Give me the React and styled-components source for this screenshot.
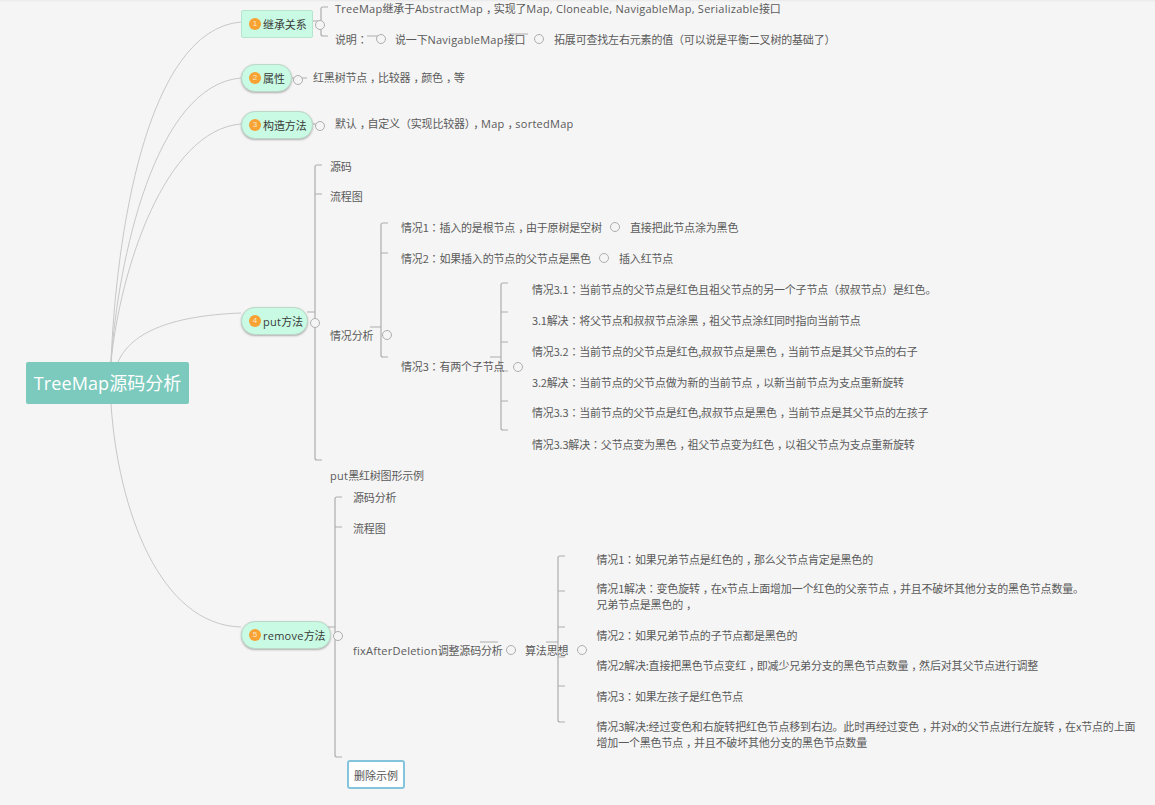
import React from "react";
import styled, { createGlobalStyle } from "styled-components";

const Global = createGlobalStyle`
  html, body { margin: 0; padding: 0; background: #f5f5f5; }
  body { font-family: "Noto Sans CJK SC", "Noto Sans", sans-serif; overflow: hidden; }
`;

const Canvas = styled.main`
  position: relative;
  width: 1155px;
  height: 805px;
  overflow: hidden;
  background: #f5f5f5;
  box-shadow: inset 0 2px 2px -1px rgba(0, 0, 0, 0.05);
`;

const Wires = styled.svg`
  position: absolute;
  left: 0;
  top: 0;
`;

const Label = styled.div`
  position: absolute;
  left: ${(p) => p.$x}px;
  top: ${(p) => p.$y - (p.$tight ? 8 : 6)}px;
  display: flex;
  flex-direction: column;
  font-size: 11px;
  line-height: ${(p) => (p.$tight ? 16 : 12)}px;
  letter-spacing: -0.18px;
  color: #5a5a5a;
  white-space: pre;
`;

const Line = styled.div``;

const Latin = styled.span`
  font-family: "Open Sans", "Noto Sans", sans-serif;
  letter-spacing: 0.25px;
`;

const Colon = styled.span`
  font-family: "Noto Sans CJK TC", sans-serif;
`;

const Comma = styled.span`
  padding-left: 3px;
  letter-spacing: -3.18px;
`;

const Root = styled.div`
  position: absolute;
  left: 26px;
  top: 362px;
  width: 163px;
  height: 42px;
  box-sizing: border-box;
  padding-bottom: 2px;
  display: flex;
  align-items: center;
  justify-content: center;
  background: #7ccabd;
  border-radius: 2px;
  color: #fff;
  font-size: 18px;
  white-space: nowrap;
  span { font-size: 18px; letter-spacing: 0.1px; }
`;

const Topic = styled.div`
  position: absolute;
  left: 241px;
  top: ${(p) => p.$y}px;
  width: ${(p) => p.$w}px;
  height: 28px;
  box-sizing: border-box;
  display: flex;
  align-items: center;
  gap: 2px;
  padding-left: 7px;
  background: #c9fbe4;
  border: 1px solid ${(p) => (p.$square ? "#b5e6cd" : "#bcd8c8")};
  border-radius: ${(p) => (p.$square ? "2px" : "14px")};
  box-shadow: ${(p) => (p.$square ? "none" : "0 1px 2px rgba(90, 90, 90, 0.45)")};
  color: #3a3a3a;
  font-size: 11px;
  letter-spacing: -0.1px;
  white-space: nowrap;
`;

const Badge = styled.span`
  width: 12px;
  height: 12px;
  flex: none;
  border-radius: 50%;
  background: #f7a233;
  color: #fde8c8;
  font: 8px/12px "Liberation Sans", sans-serif;
  text-align: center;
`;

const Toggle = styled.span`
  position: absolute;
  left: ${(p) => p.$x - 5}px;
  top: ${(p) => p.$y - 5}px;
  width: 10px;
  height: 10px;
  box-sizing: border-box;
  border: 1px solid #aeaeae;
  border-radius: 50%;
  background: #f5f5f5;
`;

const Picture = styled.div`
  position: absolute;
  left: 347px;
  top: 760px;
  width: 58px;
  height: 29px;
  box-sizing: border-box;
  display: flex;
  align-items: center;
  justify-content: center;
  background: #fff;
  border: 2px solid #84c5dd;
  border-radius: 3px;
  color: #555;
  font-size: 11px;
`;

const curves = [
  "M111 362 C116 240 145 30 241 22",
  "M111 362 C118 260 155 85 241 78",
  "M111 362 C120 270 165 130 241 124",
  "M118 362 C130 335 165 316 241 313",
  "M111 404 C118 510 160 625 241 627",
];

const bracket = (x, top, bottom, ticks, stemY, stemX, end) =>
  [
    `M${end} ${top} H${x + 2} Q${x} ${top} ${x} ${top + 2} V${bottom - 2} Q${x} ${bottom} ${x + 2} ${bottom} H${end}`,
    ...ticks.map((t) => `M${x} ${t} H${end}`),
    `M${stemX} ${stemY} H${x}`,
  ].join(" ");

const brackets = [
  bracket(321, 7, 36, [], 21, 312, 328),
  bracket(315, 165, 460, [194], 312, 307, 322),
  bracket(381, 223, 357, [253], 327, 370, 388),
  bracket(501, 283, 430, [312, 342, 371, 401], 357, 490, 508),
  bracket(335, 497, 757, [527], 627, 323, 342),
  bracket(558, 556, 722, [591, 627, 657, 686], 642, 546, 565),
  "M291 78 H307 M312 124 H320 M367 36 H378 M480 642 H498 M509 34 H528",
];

const labels = [
  [335, 8, "TreeMap继承于AbstractMap，实现了Map, Cloneable, NavigableMap, Serializable接口"],
  [335, 39, "说明："],
  [395, 39, "说一下NavigableMap接口"],
  [554, 39, "拓展可查找左右元素的值（可以说是平衡二叉树的基础了）"],
  [313, 77, "红黑树节点，比较器，颜色，等"],
  [335, 123, "默认，自定义（实现比较器），Map，sortedMap"],
  [330, 166, "源码"],
  [330, 196, "流程图"],
  [330, 335, "情况分析"],
  [401, 227, "情况1：插入的是根节点，由于原树是空树"],
  [630, 227, "直接把此节点涂为黑色"],
  [401, 258, "情况2：如果插入的节点的父节点是黑色"],
  [619, 258, "插入红节点"],
  [401, 366, "情况3：有两个子节点"],
  [532, 289, "情况3.1：当前节点的父节点是红色且祖父节点的另一个子节点（叔叔节点）是红色。"],
  [532, 320, "3.1解决：将父节点和叔叔节点涂黑，祖父节点涂红同时指向当前节点"],
  [532, 351, "情况3.2：当前节点的父节点是红色,叔叔节点是黑色，当前节点是其父节点的右子"],
  [532, 382, "3.2解决：当前节点的父节点做为新的当前节点，以新当前节点为支点重新旋转"],
  [532, 412, "情况3.3：当前节点的父节点是红色,叔叔节点是黑色，当前节点是其父节点的左孩子"],
  [532, 444, "情况3.3解决：父节点变为黑色，祖父节点变为红色，以祖父节点为支点重新旋转"],
  [330, 475, "put黑红树图形示例"],
  [353, 497, "源码分析"],
  [353, 528, "流程图"],
  [353, 650, "fixAfterDeletion调整源码分析"],
  [525, 650, "算法思想"],
  [596.5, 559, "情况1：如果兄弟节点是红色的，那么父节点肯定是黑色的"],
  [596.5, 588, "情况1解决：变色旋转，在x节点上面增加一个红色的父亲节点，并且不破坏其他分支的黑色节点数量。\n兄弟节点是黑色的，", true],
  [596.5, 635, "情况2：如果兄弟节点的子节点都是黑色的"],
  [596.5, 665, "情况2解决:直接把黑色节点变红，即减少兄弟分支的黑色节点数量，然后对其父节点进行调整"],
  [596.5, 696, "情况3：如果左孩子是红色节点"],
  [596.5, 726, "情况3解决:经过变色和右旋转把红色节点移到右边。此时再经过变色，并对x的父节点进行左旋转，在x节点的上面\n增加一个黑色节点，并且不破坏其他分支的黑色节点数量", true],
];

const topics = [
  { n: 1, text: "继承关系", y: 10, w: 72, square: true },
  { n: 2, text: "属性", y: 64, w: 51 },
  { n: 3, text: "构造方法", y: 111, w: 72 },
  { n: 4, text: "put方法", y: 307, w: 67 },
  { n: 5, text: "remove方法", y: 621, w: 90 },
];

const toggles = [
  [320, 25], [298, 80], [320, 126], [315, 323], [338, 636], [387, 335], [518, 367],
  [381, 39], [539, 39], [615, 227], [604, 258], [511, 650], [582, 650],
];

const punct = (text, prefix) =>
  text.split(/([，：])/).map((part, i) => {
    if (part === "：") return <Colon key={`${prefix}-${i}`}>{part}</Colon>;
    if (part === "，") return <Comma key={`${prefix}-${i}`}>{part}</Comma>;
    return part;
  });

const rich = (text) =>
  text.split(/([A-Za-z][A-Za-z, ]+)/).map((part, i) =>
    i % 2 ? <Latin key={i}>{part}</Latin> : punct(part, i)
  );

export default function App() {
  return (
    <Canvas>
      <Global />
      <Wires width="1155" height="805" fill="none">
        {curves.map((d) => (
          <path key={d} d={d} stroke="#c8c8c8" strokeWidth="1" />
        ))}
        {brackets.map((d) => (
          <path key={d} d={d} stroke="#adadad" strokeWidth="1.2" />
        ))}
      </Wires>
      <Root>
        <span>{rich("TreeMap")}</span>源码分析
      </Root>
      {topics.map((t) => (
        <Topic key={t.n} $y={t.y} $w={t.w} $square={t.square}>
          <Badge>{t.n}</Badge>
          <span>{rich(t.text)}</span>
        </Topic>
      ))}
      {toggles.map(([x, y]) => (
        <Toggle key={`${x}-${y}`} $x={x} $y={y} />
      ))}
      {labels.map(([x, y, text, tight]) => (
        <Label key={text} $x={x} $y={y} $tight={tight}>
          {text.split("\n").map((line) => (
            <Line key={line}>{rich(line)}</Line>
          ))}
        </Label>
      ))}
      <Picture>删除示例</Picture>
    </Canvas>
  );
}
